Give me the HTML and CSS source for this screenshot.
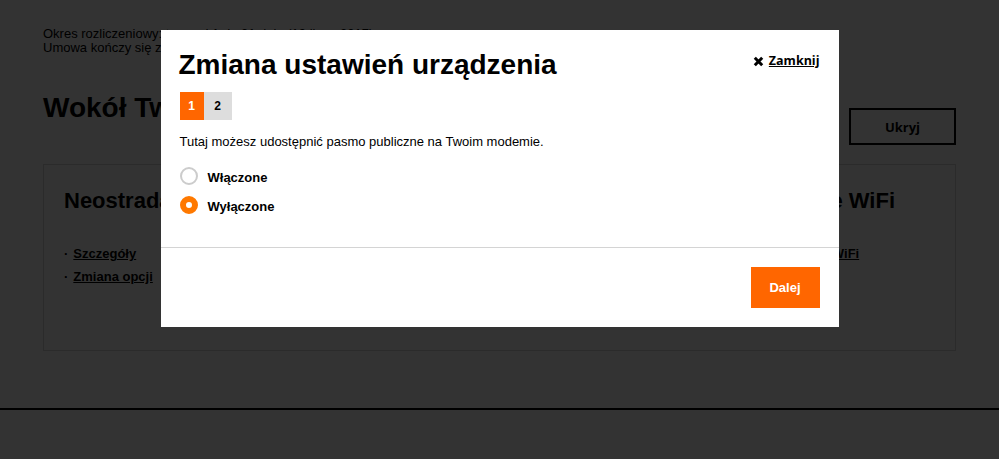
FILE: index.html
```html
<!DOCTYPE html>
<html lang="pl">
<head>
  <meta charset="UTF-8">
  <meta name="viewport" content="width=device-width, initial-scale=1.0">
  <title>Mój Orange - Neostrada</title>
  <link rel="stylesheet" href="styles.css">
</head>
<body>
  <div class="container">
    <p class="contract">
      Okres rozliczeniowy: trwa od 1 do 31 dnia (19 lipca 2017)<br>
      Umowa kończy się za 14 miesięcy (19 września 2018)
    </p>

    <div class="section-head">
      <h1>Wokół Twoich usług</h1>
      <button class="btn-outline">Ukryj</button>
    </div>

    <div class="services">
      <div class="service">
        <h2>Neostrada</h2>
        <ul>
          <li><a href="#">Szczegóły</a></li>
          <li><a href="#">Zmiana opcji</a></li>
        </ul>
      </div>
      <div class="service">
        <h2>Telefon</h2>
        <ul>
          <li><a href="#">Szczegóły</a></li>
        </ul>
      </div>
      <div class="service">
        <h2>Domowe WiFi</h2>
        <ul>
          <li><a href="#">Ustawienia WiFi</a></li>
        </ul>
      </div>
    </div>
  </div>

  <div class="footer"></div>

  <!-- Modal -->
  <div class="overlay">
    <div class="modal">
      <div class="modal-body">
        <div class="modal-head">
          <h2 class="modal-title">Zmiana ustawień urządzenia</h2>
          <a href="#" class="close">
            <svg viewBox="0 0 11 11">
              <path d="M1.8 1.8l7.4 7.4M9.2 1.8l-7.4 7.4"></path>
            </svg>
            <span>Zamknij</span>
          </a>
        </div>

        <div class="steps">
          <span class="step active">1</span>
          <span class="step">2</span>
        </div>

        <p class="intro">Tutaj możesz udostępnić pasmo publiczne na Twoim modemie.</p>

        <div class="options">
          <label class="option">
            <input type="radio" name="hotspot" value="on">
            <span>Włączone</span>
          </label>
          <label class="option">
            <input type="radio" name="hotspot" value="off" checked>
            <span>Wyłączone</span>
          </label>
        </div>
      </div>

      <div class="modal-foot">
        <button class="btn-primary">Dalej</button>
      </div>
    </div>
  </div>
</body>
</html>
```

FILE: styles.css
```css
body {
  font-family: "Liberation Sans", Arial, sans-serif;
  margin: 0;
  padding: 0;
  background: #fff;
  color: #000;
}
.container {
  padding: 27px 43px 0;
}
.contract {
  margin: 0;
  font-size: 13px;
  line-height: 14px;
}
.section-head {
  display: flex;
  justify-content: space-between;
  align-items: flex-start;
  margin-top: 37px;
}
h1 {
  margin: 0;
  font-size: 28px;
  line-height: 32px;
}
.btn-outline {
  margin-top: 16px;
  width: 107px;
  height: 37px;
  background: #fff;
  border: 2px solid #000;
  font-family: "Open Sans", sans-serif;
  font-weight: bold;
  font-size: 13px;
  color: #000;
}
.services {
  display: grid;
  grid-template-columns: 1fr 1fr 184px;
  margin-top: 19px;
  padding: 23px 20px 62px;
  border: 1px solid #d6d6d6;
}
.service h2 {
  margin: 0;
  font-size: 22px;
  line-height: 25px;
}
.service ul {
  list-style: none;
  margin: 29px 0 0;
  padding: 0;
}
.service li {
  font-size: 13px;
  font-weight: bold;
  line-height: 23px;
}
.service li::before {
  content: "·";
  margin-right: 5px;
}
.service a {
  color: #000;
}
.footer {
  margin-top: 57px;
  border-top: 2px solid #000;
  height: 60px;
}

/* modal */
.overlay {
  position: fixed;
  inset: 0;
  background: rgba(0, 0, 0, 0.8);
  display: flex;
  justify-content: center;
  align-items: flex-start;
  padding-top: 30px;
}
.modal {
  width: 678px;
  background: #fff;
}
.modal-body {
  padding: 19px 19px 31px 18px;
  border-bottom: 1px solid #d4d4d4;
}
.modal-head {
  display: flex;
  justify-content: space-between;
  align-items: flex-start;
}
.modal-title {
  margin: 0;
  font-size: 28px;
  line-height: 32px;
}
.close {
  display: flex;
  align-items: center;
  gap: 5px;
  margin-top: 4px;
  color: #000;
  font-family: "Open Sans", sans-serif;
  font-weight: bold;
  font-size: 12.5px;
  line-height: 16px;
}
.close svg {
  width: 11px;
  height: 11px;
  stroke: #000;
  stroke-width: 3;
  fill: none;
}
.steps {
  display: flex;
  margin-top: 11px;
  padding-left: 1px;
}
.step {
  width: 28px;
  height: 28px;
  line-height: 28px;
  text-align: center;
  font-size: 12px;
  font-weight: bold;
  background: #ddd;
}
.step.active {
  width: 24px;
  background: #ff6600;
  color: #fff;
}
.intro {
  margin: 14px 0 0 1px;
  font-size: 13px;
  line-height: 16px;
}
.options {
  display: flex;
  flex-direction: column;
  gap: 9px;
  margin-top: 17px;
  padding-left: 1px;
}
.option {
  display: flex;
  align-items: flex-start;
  gap: 10px;
  font-size: 13px;
  font-weight: bold;
  line-height: 18px;
}
.option span {
  padding-top: 2px;
}
.option input {
  appearance: none;
  margin: 0;
  width: 18px;
  height: 18px;
  border-radius: 50%;
  border: 2px solid #ccc;
  background: #fff;
}
.option input:checked {
  border: 6px solid #ff7900;
}
.modal-foot {
  display: flex;
  justify-content: flex-end;
  padding: 19px;
}
.btn-primary {
  width: 69px;
  height: 41px;
  border: none;
  background: #ff6600;
  color: #fff;
  font-family: "Liberation Sans", Arial, sans-serif;
  font-weight: bold;
  font-size: 13px;
}
```
